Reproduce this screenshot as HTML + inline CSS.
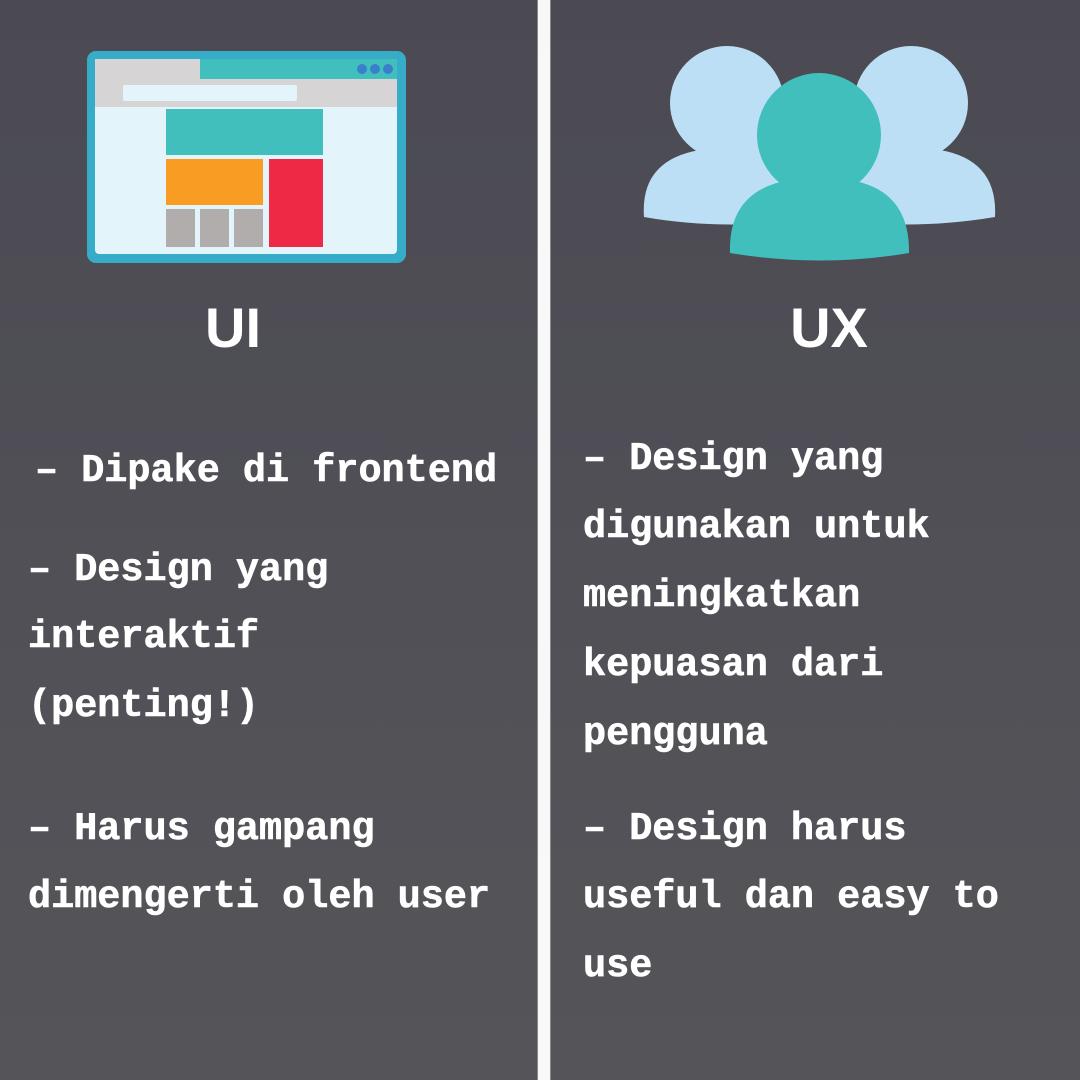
<!DOCTYPE html>
<html><head><meta charset="utf-8"><style>
html,body{margin:0;padding:0}
body{width:1080px;height:1080px;position:relative;overflow:hidden;background:linear-gradient(#4b4a53,#555559);font-family:"Liberation Mono",monospace;color:#fff}
.t{position:absolute;font-weight:bold;font-size:38.5px;line-height:68px;white-space:nowrap;letter-spacing:0;-webkit-text-stroke:0.6px #fff}
.h{position:absolute;font-family:"Liberation Sans",sans-serif;font-weight:bold;font-size:56px;line-height:60px;width:200px;text-align:center}
</style></head><body>
<div style="position:absolute;left:537px;top:0;width:14px;height:1080px;background:#f8f8f8;border-left:1px solid #888;border-right:1px solid #888;box-sizing:border-box"></div>
<svg style="position:absolute;left:0;top:0" width="1080" height="300">
<rect x="87" y="51" width="319" height="212" rx="9" fill="#37acc8"/>
<rect x="95" y="59" width="302" height="195" rx="4" fill="#e3f4fa"/>
<rect x="95" y="59" width="302" height="48" fill="#d6d4d5"/>
<rect x="200" y="59" width="197" height="20" fill="#41bfbc"/>
<rect x="95" y="59" width="105" height="20" rx="3" fill="#d6d4d5"/>
<rect x="123" y="85" width="174" height="16" rx="2" fill="#e3f4fa"/>
<circle cx="362" cy="69" r="5" fill="#3a7fcb"/><circle cx="375" cy="69" r="5" fill="#3a7fcb"/><circle cx="388" cy="69" r="5" fill="#3a7fcb"/>
<rect x="166" y="109" width="157" height="46" fill="#41bfbc"/>
<rect x="166" y="159" width="97" height="46" fill="#f89c24"/>
<rect x="269" y="159" width="54" height="88" fill="#ee2945"/>
<rect x="166" y="209" width="29" height="38" fill="#b1adad"/>
<rect x="200" y="209" width="29" height="38" fill="#b1adad"/>
<rect x="234" y="209" width="29" height="38" fill="#b1adad"/>
<g fill="#bcdff5">
<circle cx="727" cy="103" r="57"/>
<path d="M644 217 Q640 160 700 150 L760 150 Q820 160 820 217 Q730 232 644 217Z"/>
<circle cx="911" cy="103" r="57"/>
<path d="M818 217 Q820 160 880 150 L940 150 Q998 160 995 217 Q905 232 818 217Z"/>
</g>
<g fill="#41bfbc">
<circle cx="819" cy="135" r="62"/>
<path d="M730 253 Q728 190 790 180 L850 180 Q910 190 909 253 Q820 268 730 253Z"/>
</g>
</svg>
<div class="h" style="left:133px;top:298px">UI</div>
<div class="h" style="left:729px;top:298px">UX</div>
<div class="t" style="left:35px;top:437px">– Dipake di frontend</div>
<div class="t" style="left:28px;top:536px">– Design yang</div>
<div class="t" style="left:28px;top:603px">interaktif</div>
<div class="t" style="left:28px;top:672px">(penting!)</div>
<div class="t" style="left:28px;top:795px">– Harus gampang</div>
<div class="t" style="left:28px;top:863px">dimengerti oleh user</div>
<div class="t" style="left:583px;top:425px">– Design yang</div>
<div class="t" style="left:583px;top:493px">digunakan untuk</div>
<div class="t" style="left:583px;top:562px">meningkatkan</div>
<div class="t" style="left:583px;top:631px">kepuasan dari</div>
<div class="t" style="left:583px;top:700px">pengguna</div>
<div class="t" style="left:583px;top:795px">– Design harus</div>
<div class="t" style="left:583px;top:863px">useful dan easy to</div>
<div class="t" style="left:583px;top:932px">use</div>
</body></html>
